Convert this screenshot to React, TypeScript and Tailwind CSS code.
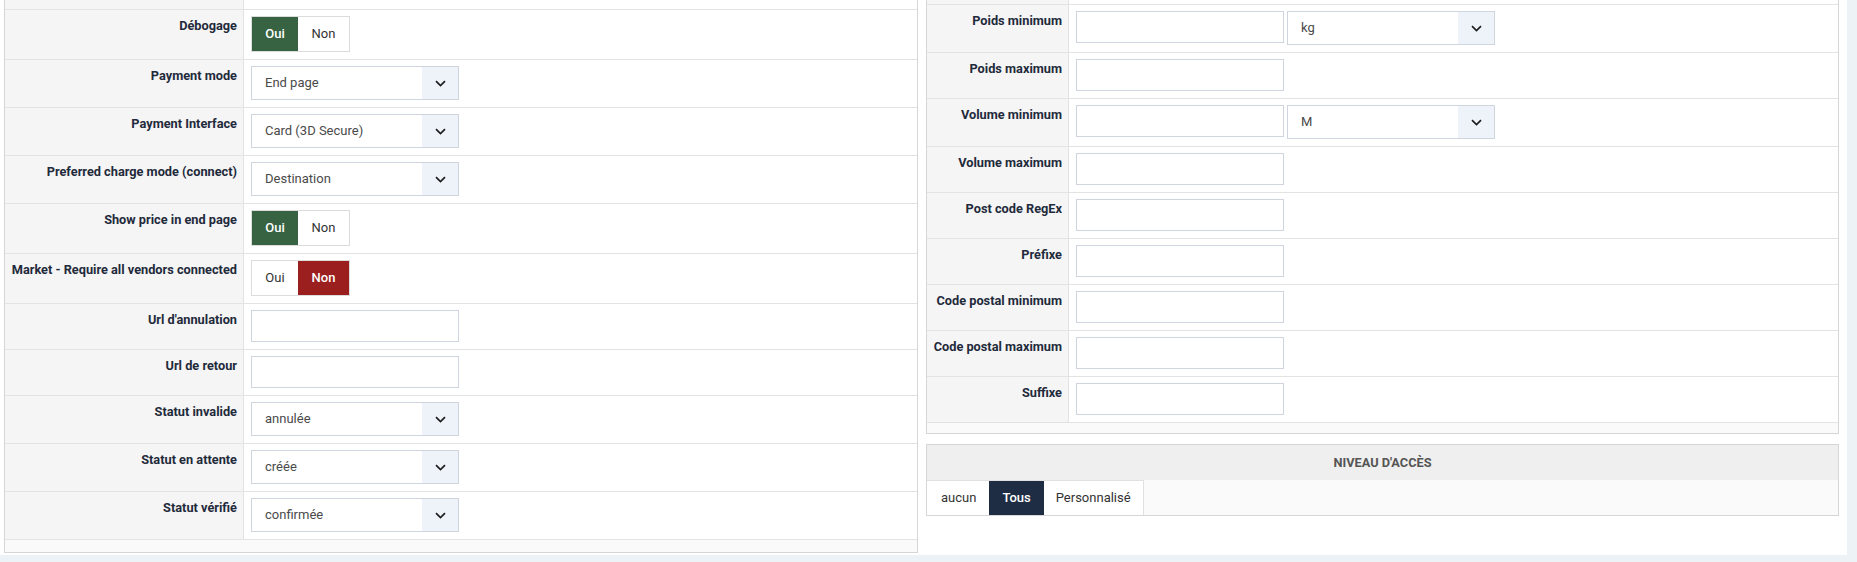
import type { ReactNode } from "react";

const font = { fontFamily: "Roboto, 'Noto Sans', sans-serif" };

const ChevronDown = () => (
  <svg width="11" height="7" viewBox="0 0 11 7" fill="none" stroke="#1d1d1d" strokeWidth="1.7">
    <path d="M1 1.2l4.5 4.3L10 1.2" />
  </svg>
);

const Select = ({ value }: { value: string }) => (
  <div className="flex h-[34px] w-[208px] items-stretch border border-[#cfd5de] bg-white">
    <span className="flex flex-1 items-center pl-[13px] text-[13px] text-[#4a4a4a]">{value}</span>
    <span className="flex w-[36px] items-center justify-center bg-[#eef3fa]">
      <ChevronDown />
    </span>
  </div>
);

const TextInput = () => <div className="h-[32px] w-[208px] border border-[#cfd5de] bg-white" />;

const Toggle = ({ value }: { value: "oui" | "non" }) => (
  <div className="flex h-[36px] border border-[#dcdcdc] bg-white text-[13px]">
    <span
      className={`flex w-[46px] items-center justify-center ${
        value === "oui" ? "bg-[#376342] font-medium text-white" : "text-[#333]"
      }`}
    >
      Oui
    </span>
    <span
      className={`flex w-[51px] items-center justify-center ${
        value === "non" ? "bg-[#9c1f1f] font-medium text-white" : "text-[#333]"
      }`}
    >
      Non
    </span>
  </div>
);

const Row = ({ label, labelW, children }: { label: string; labelW: string; children: ReactNode }) => (
  <div className="flex border-b border-[#e3e3e3]">
    <div
      className={`${labelW} shrink-0 border-r border-[#e3e3e3] bg-[#f5f5f5] pr-[6px] pt-[7px] text-right text-[12.75px] font-bold leading-[18px] text-[#1f2a3b]`}
    >
      {label}
    </div>
    <div className="flex gap-[3px] pb-[7px] pl-[7px] pt-[6px]">{children}</div>
  </div>
);

const L = "w-[239px]";
const R = "w-[142px]";

export default function App() {
  return (
    <div className="h-[562px] w-full overflow-hidden bg-[#edf2f7]" style={font}>
      <div className="flex h-[555px] w-[1847px] items-start gap-[8px] overflow-hidden bg-white pl-[4px]">
        {/* payment settings */}
        <section className="w-[914px] border border-t-0 border-[#d6d6d6] bg-white">
          <div className="flex h-[10px] border-b border-[#e3e3e3]">
            <div className={`${L} border-r border-[#e3e3e3] bg-[#f5f5f5]`} />
          </div>
          <Row label="Débogage" labelW={L}>
            <Toggle value="oui" />
          </Row>
          <Row label="Payment mode" labelW={L}>
            <Select value="End page" />
          </Row>
          <Row label="Payment Interface" labelW={L}>
            <Select value="Card (3D Secure)" />
          </Row>
          <Row label="Preferred charge mode (connect)" labelW={L}>
            <Select value="Destination" />
          </Row>
          <Row label="Show price in end page" labelW={L}>
            <Toggle value="oui" />
          </Row>
          <Row label="Market - Require all vendors connected" labelW={L}>
            <Toggle value="non" />
          </Row>
          <Row label="Url d'annulation" labelW={L}>
            <TextInput />
          </Row>
          <Row label="Url de retour" labelW={L}>
            <TextInput />
          </Row>
          <Row label="Statut invalide" labelW={L}>
            <Select value="annulée" />
          </Row>
          <Row label="Statut en attente" labelW={L}>
            <Select value="créée" />
          </Row>
          <Row label="Statut vérifié" labelW={L}>
            <Select value="confirmée" />
          </Row>
          <div className="h-[12px] bg-[#fafafa]" />
        </section>

        <div className="flex w-[913px] flex-col">
          {/* shipping restrictions */}
          <section className="border border-t-0 border-[#d6d6d6] bg-white">
            <div className="flex h-[5px] border-b border-[#e3e3e3]">
              <div className={`${R} border-r border-[#e3e3e3] bg-[#f5f5f5]`} />
            </div>
            <Row label="Poids minimum" labelW={R}>
              <TextInput />
              <Select value="kg" />
            </Row>
            <Row label="Poids maximum" labelW={R}>
              <TextInput />
            </Row>
            <Row label="Volume minimum" labelW={R}>
              <TextInput />
              <Select value="M" />
            </Row>
            <Row label="Volume maximum" labelW={R}>
              <TextInput />
            </Row>
            <Row label="Post code RegEx" labelW={R}>
              <TextInput />
            </Row>
            <Row label="Préfixe" labelW={R}>
              <TextInput />
            </Row>
            <Row label="Code postal minimum" labelW={R}>
              <TextInput />
            </Row>
            <Row label="Code postal maximum" labelW={R}>
              <TextInput />
            </Row>
            <Row label="Suffixe" labelW={R}>
              <TextInput />
            </Row>
            <div className="h-[10px] bg-[#fafafa]" />
          </section>

          {/* access level */}
          <section className="mt-[10px] border border-[#d6d6d6] bg-[#fafafa]">
            <div className="flex h-[35px] items-center justify-center bg-[#efefef] text-[12.75px] font-bold uppercase text-[#555]">
              Niveau d'accès
            </div>
            <div className="flex h-[35px]">
              <div className="flex border-r border-t border-[#e0e0e0] bg-white text-[13px] text-[#333]">
                <span className="flex items-center pl-[14px] pr-[13px]">aucun</span>
                <span className="flex items-center bg-[#1f2d44] px-[13px] font-medium text-white">Tous</span>
                <span className="flex items-center px-[12px]">Personnalisé</span>
              </div>
            </div>
          </section>
        </div>
      </div>
    </div>
  );
}
